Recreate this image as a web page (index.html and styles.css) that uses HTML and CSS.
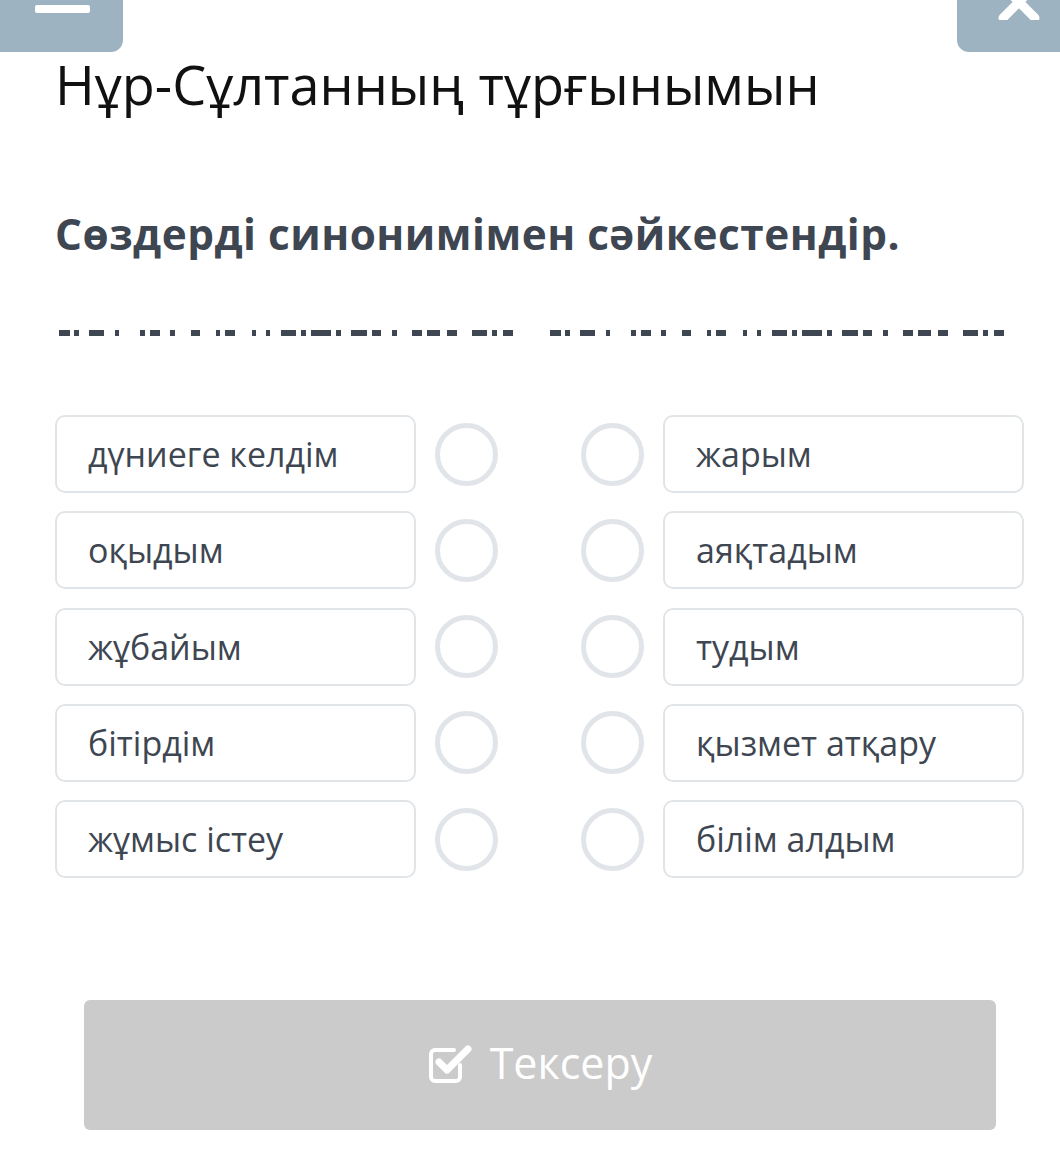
FILE: index.html
```html
<!DOCTYPE html>
<html lang="kk">
<head>
<meta charset="utf-8">
<link rel="stylesheet" href="styles.css">
</head>
<body>
<div class="page">
  <div class="topbar">
    <div class="tab tab-left"><span class="dash"></span></div>
    <div class="tab tab-right">
      <svg class="xicon" width="44" height="20" viewBox="0 0 44 20"><path d="M6 -14 L38 18 M38 -14 L6 18" stroke="#fff" stroke-width="9" stroke-linecap="round"/></svg>
    </div>
  </div>
  <h1 class="title">Нұр-Сұлтанның тұрғынымын</h1>
  <h2 class="task">Сөздерді синонимімен сәйкестендір.</h2>
  <div class="dashes">
    <svg class="dashline" width="460" height="8" viewBox="0 0 460 8" fill="#3e4651">
      <rect x="0" y="1" width="11" height="6"/><rect x="15" y="1" width="5" height="6"/><rect x="30" y="1" width="15" height="6"/><rect x="56" y="1" width="4" height="6"/><rect x="81" y="1" width="5" height="6"/><rect x="91" y="1" width="10" height="6"/><rect x="111" y="1" width="5" height="6"/><rect x="132" y="1" width="9" height="6"/><rect x="157" y="1" width="4" height="6"/><rect x="166" y="1" width="10" height="6"/><rect x="193" y="1" width="4" height="6"/><rect x="207" y="1" width="4" height="6"/><rect x="222" y="1" width="15" height="6"/><rect x="242" y="1" width="5" height="6"/><rect x="252" y="1" width="20" height="6"/><rect x="277" y="1" width="5" height="6"/><rect x="292" y="1" width="16" height="6"/><rect x="313" y="1" width="9" height="6"/><rect x="333" y="1" width="5" height="6"/><rect x="353" y="1" width="10" height="6"/><rect x="368" y="1" width="13" height="6"/><rect x="388" y="1" width="10" height="6"/><rect x="413" y="1" width="15" height="6"/><rect x="433" y="1" width="5" height="6"/><rect x="444" y="1" width="10" height="6"/>
    </svg>
    <svg class="dashline" width="470" height="8" viewBox="0 0 460 8" fill="#3e4651">
      <rect x="0" y="1" width="11" height="6"/><rect x="15" y="1" width="5" height="6"/><rect x="30" y="1" width="15" height="6"/><rect x="56" y="1" width="4" height="6"/><rect x="81" y="1" width="5" height="6"/><rect x="91" y="1" width="10" height="6"/><rect x="111" y="1" width="5" height="6"/><rect x="132" y="1" width="9" height="6"/><rect x="157" y="1" width="4" height="6"/><rect x="166" y="1" width="10" height="6"/><rect x="193" y="1" width="4" height="6"/><rect x="207" y="1" width="4" height="6"/><rect x="222" y="1" width="15" height="6"/><rect x="242" y="1" width="5" height="6"/><rect x="252" y="1" width="20" height="6"/><rect x="277" y="1" width="5" height="6"/><rect x="292" y="1" width="16" height="6"/><rect x="313" y="1" width="9" height="6"/><rect x="333" y="1" width="5" height="6"/><rect x="353" y="1" width="10" height="6"/><rect x="368" y="1" width="13" height="6"/><rect x="388" y="1" width="10" height="6"/><rect x="413" y="1" width="15" height="6"/><rect x="433" y="1" width="5" height="6"/><rect x="444" y="1" width="10" height="6"/>
    </svg>
  </div>
  <div class="match">
    <div class="row"><div class="item">дүниеге келдім</div><span class="dot"></span><span class="dot"></span><div class="item">жарым</div></div>
    <div class="row"><div class="item">оқыдым</div><span class="dot"></span><span class="dot"></span><div class="item">аяқтадым</div></div>
    <div class="row"><div class="item">жұбайым</div><span class="dot"></span><span class="dot"></span><div class="item">тудым</div></div>
    <div class="row"><div class="item">бітірдім</div><span class="dot"></span><span class="dot"></span><div class="item">қызмет атқару</div></div>
    <div class="row"><div class="item">жұмыс істеу</div><span class="dot"></span><span class="dot"></span><div class="item">білім алдым</div></div>
  </div>
  <div class="actions">
    <button class="check">
      <svg width="46" height="42" viewBox="0 0 46 42" fill="none">
        <path d="M32 22 V34 a4 4 0 0 1 -4 4 H7 a4 4 0 0 1 -4 -4 V11 a4 4 0 0 1 4 -4 H26" stroke="#fff" stroke-width="4" stroke-linecap="round"/>
        <path d="M11 19 L19 27 L40 6" stroke="#fff" stroke-width="7" stroke-linecap="round" stroke-linejoin="round"/>
      </svg>
      <span>Тексеру</span>
    </button>
  </div>
</div>
</body>
</html>
```
FILE: styles.css
```css
* { box-sizing: border-box; }
html, body { margin: 0; padding: 0; background: #fff; }
body { font-family: "Open Sans", "Noto Sans", sans-serif; color: #3e4651; }
.page { width: 1060px; height: 1151px; overflow: hidden; }
.topbar { display: flex; justify-content: space-between; height: 52px; }
.tab { background: #9eb3c1; height: 52px; }
.tab-left { width: 123px; border-bottom-right-radius: 12px; padding: 5px 0 0 35px; }
.dash { display: block; width: 55px; height: 8px; background: #fff; border-radius: 2px; }
.tab-right { width: 103px; border-bottom-left-radius: 12px; padding-left: 40px; }
.xicon { display: block; }
.title { margin: 0; padding-left: 55px; font-weight: 400; font-size: 54px; line-height: 64px; color: #111; }
.task { margin: 0; padding: 93px 0 0 55px; font-weight: 700; font-size: 42.3px; line-height: 50px; color: #3e4651; letter-spacing: 0.5px; }
.dashes { display: flex; padding: 70px 0 0 59px; gap: 26px; }
.dashline { display: block; }
.match { padding: 78px 0 0 55px; display: flex; flex-direction: column; gap: 18.3px; }
.row { display: flex; align-items: center; }
.item { width: 361px; height: 78px; border: 2px solid #e1e5e8; border-radius: 10px; padding-left: 31px; font-size: 34px; line-height: 74px; color: #3e4651; }
.dot { width: 63px; height: 63px; border: 5px solid #e1e5e9; border-radius: 50%; flex: none; }
.dot:first-of-type { margin-left: 19px; }
.row .dot + .dot { margin-left: 83px; margin-right: 19px; }
.actions { padding: 122px 0 0 84px; }
.check { width: 912px; height: 130px; background: #cbcbcb; border: none; border-radius: 6px; display: flex; align-items: center; justify-content: center; gap: 16px; color: #fff; font-family: "Open Sans", sans-serif; font-size: 43px; padding: 0 0 6px 0; }
.check svg { margin-top: 4px; }
```
